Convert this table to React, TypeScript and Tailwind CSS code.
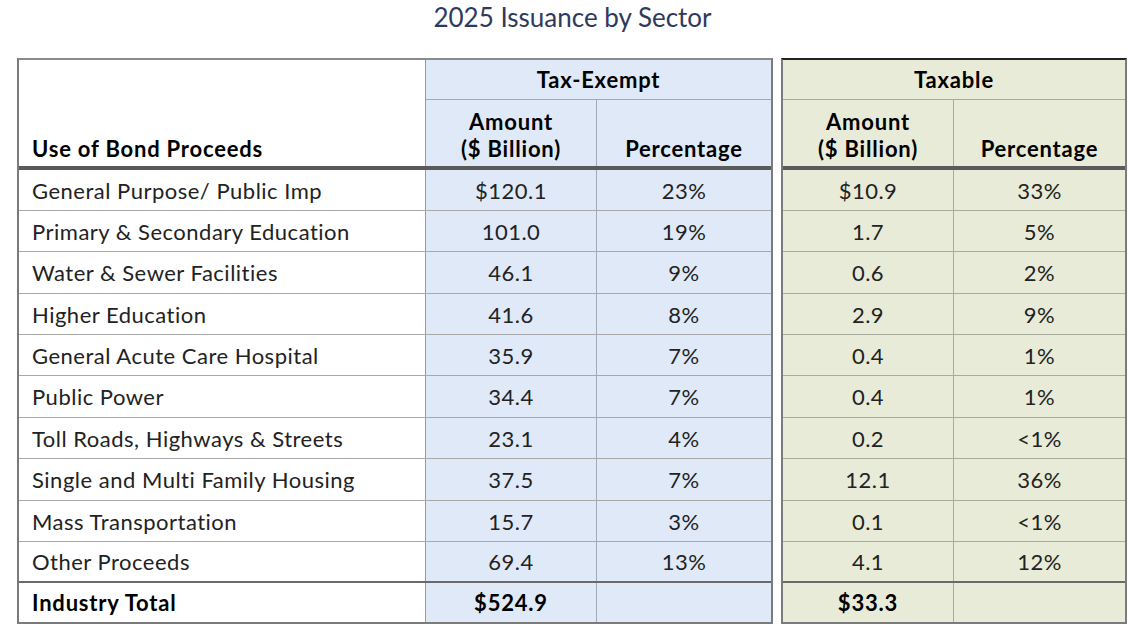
import React from "react";

type Row = { name: string; a1: string; p1: string; a2: string; p2: string; h: string };

const rows: Row[] = [
  { name: "General Purpose/ Public Imp", a1: "$120.1", p1: "23%", a2: "$10.9", p2: "33%", h: "h-[40px]" },
  { name: "Primary & Secondary Education", a1: "101.0", p1: "19%", a2: "1.7", p2: "5%", h: "h-[40px]" },
  { name: "Water & Sewer Facilities", a1: "46.1", p1: "9%", a2: "0.6", p2: "2%", h: "h-[41px]" },
  { name: "Higher Education", a1: "41.6", p1: "8%", a2: "2.9", p2: "9%", h: "h-[40px]" },
  { name: "General Acute Care Hospital", a1: "35.9", p1: "7%", a2: "0.4", p2: "1%", h: "h-[40px]" },
  { name: "Public Power", a1: "34.4", p1: "7%", a2: "0.4", p2: "1%", h: "h-[41px]" },
  { name: "Toll Roads, Highways & Streets", a1: "23.1", p1: "4%", a2: "0.2", p2: "<1%", h: "h-[40px]" },
  { name: "Single and Multi Family Housing", a1: "37.5", p1: "7%", a2: "12.1", p2: "36%", h: "h-[41px]" },
  { name: "Mass Transportation", a1: "15.7", p1: "3%", a2: "0.1", p2: "<1%", h: "h-[40px]" },
  { name: "Other Proceeds", a1: "69.4", p1: "13%", a2: "4.1", p2: "12%", h: "h-[39px]" },
];

const body = "text-[22px] tracking-[0.5px] text-[#222]";
const head = "text-[22px] tracking-[0.8px] font-bold text-black";

export default function App() {
  return (
    <div className="w-[1145px] h-[630px] bg-white font-['Lato',sans-serif] text-[#1f1f1f] overflow-hidden">
      <h1 className="h-[58px] text-center text-[26px] leading-[34px] text-[#2f3a5b]">
        2025 Issuance by Sector
      </h1>
      <div className="flex gap-[8px] pl-[17px]">
        {/* Table 1 */}
        <div className="w-[756px] border-2 border-[#7b7b7b] border-t-[#8a8a8a]">
          <div className="flex h-[106px] border-b-4 border-[#5a5a5a] box-content">
            <div className={`w-[407px] border-r border-[#9a9a9a] flex items-end pl-[13px] pb-[4px] leading-[27px] ${head}`}>
              Use of Bond Proceeds
            </div>
            <div className="w-[345px] bg-[#dfe9f8] flex flex-col">
              <div className={`h-[40px] border-b border-[#a3a9b0] flex items-center justify-center ${head}`}>
                Tax-Exempt
              </div>
              <div className="flex flex-1">
                <div className={`w-[171px] border-r border-[#a3a9b0] flex flex-col items-center justify-end pb-[4px] leading-[27px] ${head}`}>
                  <span>Amount</span>
                  <span>($ Billion)</span>
                </div>
                <div className={`flex-1 flex items-end justify-center pb-[4px] leading-[27px] ${head}`}>
                  Percentage
                </div>
              </div>
            </div>
          </div>
          {rows.map((r, i) => (
            <div
              key={r.name}
              className={`flex ${r.h} box-content ${i === rows.length - 1 ? "border-b-2 border-[#6a6a6a]" : "border-b border-[#a8a8a8]"}`}
            >
              <div className={`w-[407px] border-r border-[#9a9a9a] flex items-center pl-[13px] ${body}`}>
                {r.name}
              </div>
              <div className={`w-[171px] bg-[#dfe9f8] border-r border-[#a3a9b0] flex items-center justify-center ${body}`}>
                {r.a1}
              </div>
              <div className={`flex-1 bg-[#dfe9f8] flex items-center justify-center ${body}`}>
                {r.p1}
              </div>
            </div>
          ))}
          <div className="flex h-[39px]">
            <div className={`w-[407px] border-r border-[#9a9a9a] flex items-center pl-[13px] ${head}`}>
              Industry Total
            </div>
            <div className={`w-[171px] bg-[#dfe9f8] border-r border-[#a3a9b0] flex items-center justify-center ${head}`}>
              $524.9
            </div>
            <div className="flex-1 bg-[#dfe9f8]" />
          </div>
        </div>

        {/* Table 2 */}
        <div className="w-[346px] border-2 border-[#7b7b7b] border-t-[#222] bg-[#e8ebd8]">
          <div className="flex flex-col h-[106px] border-b-4 border-[#5a5a5a] box-content">
            <div className={`h-[40px] border-b border-[#a9ab9c] flex items-center justify-center ${head}`}>
              Taxable
            </div>
            <div className="flex flex-1">
              <div className={`w-[171px] border-r border-[#a9ab9c] flex flex-col items-center justify-end pb-[4px] leading-[27px] ${head}`}>
                <span>Amount</span>
                <span>($ Billion)</span>
              </div>
              <div className={`flex-1 flex items-end justify-center pb-[4px] leading-[27px] ${head}`}>
                Percentage
              </div>
            </div>
          </div>
          {rows.map((r, i) => (
            <div
              key={r.name}
              className={`flex ${r.h} box-content ${i === rows.length - 1 ? "border-b-2 border-[#6a6a6a]" : "border-b border-[#a9ab9c]"}`}
            >
              <div className={`w-[171px] border-r border-[#a9ab9c] flex items-center justify-center ${body}`}>
                {r.a2}
              </div>
              <div className={`flex-1 flex items-center justify-center ${body}`}>
                {r.p2}
              </div>
            </div>
          ))}
          <div className="flex h-[39px]">
            <div className={`w-[171px] border-r border-[#a9ab9c] flex items-center justify-center ${head}`}>
              $33.3
            </div>
            <div className="flex-1" />
          </div>
        </div>
      </div>
    </div>
  );
}
